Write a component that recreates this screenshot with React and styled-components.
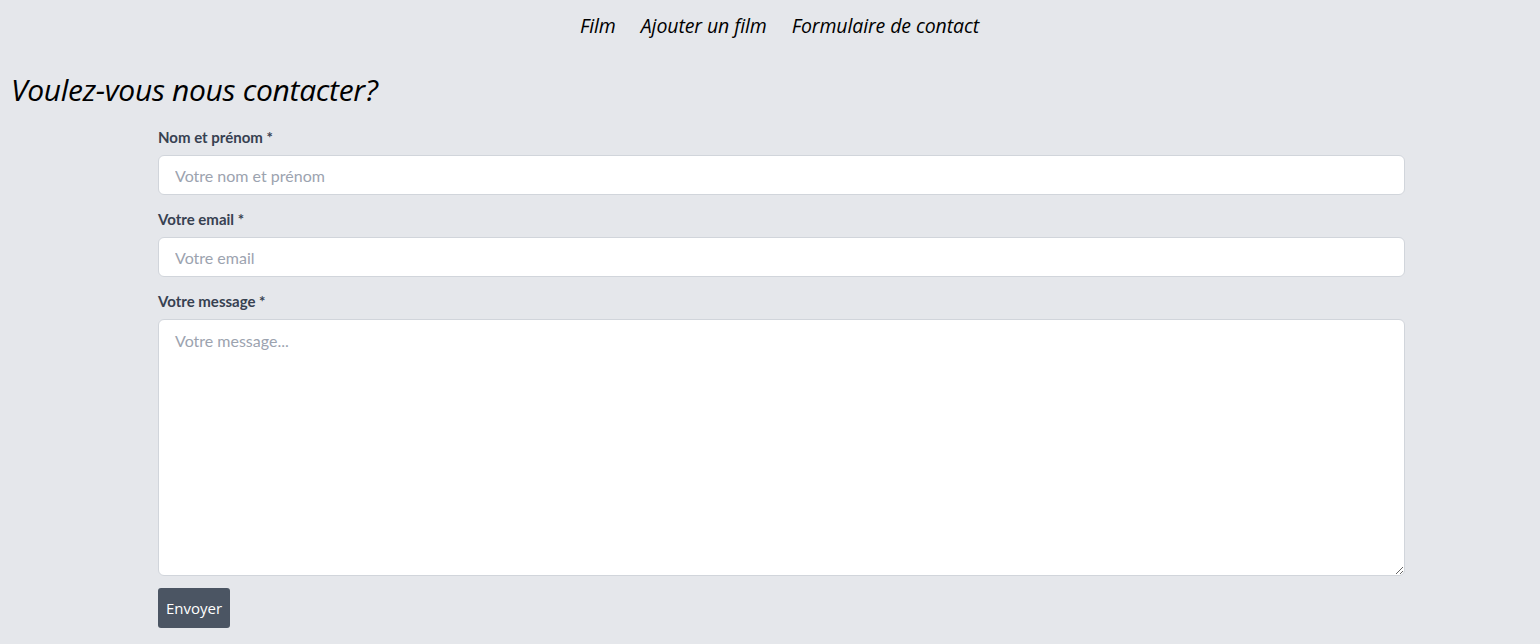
import React from 'react';
import styled, { createGlobalStyle } from 'styled-components';

const GlobalStyle = createGlobalStyle`
    body {
        margin: 8px;
        background: #e5e7eb;
        font-family: "Open Sans", "Noto Sans", sans-serif;
    }
`

const Nav = styled.nav`
    display: flex;
    justify-content: center;
    gap: 25px;
    height: 36px;
    line-height: 36px;
    padding-left: 19px;
    a {
        font-family: "Open Sans", sans-serif;
        font-style: italic;
        font-size: 19.5px;
        color: #000;
        text-decoration: none;
        letter-spacing: -0.1px;
    }
`

const Title = styled.h1`
    margin: 26px 0 0 3px;
    font-family: "Open Sans", sans-serif;
    font-style: italic;
    font-weight: 400;
    font-size: 30px;
    line-height: 40px;
    letter-spacing: -0.3px;
    color: #000;
`

const Form = styled.form`
    display: flex;
    flex-direction: column;
    width: 1247px;
    margin: 18px 0 0 150px;
`

const Label = styled.label`
    font-family: Lato, sans-serif;
    font-weight: 700;
    font-size: 15px;
    line-height: 18px;
    color: #374151;
    margin: 0 0 9px;
`

const Input = styled.input`
    box-sizing: border-box;
    height: 40px;
    border: 1px solid #d1d5db;
    border-radius: 6px;
    background: #fff;
    padding: 0 16px;
    font-family: Lato, sans-serif;
    font-size: 16px;
    color: #111827;
    margin-bottom: 15px;
    &::placeholder { color: #9ca3af; }
`

const TextArea = styled.textarea`
    box-sizing: border-box;
    height: 257px;
    border: 1px solid #d1d5db;
    border-radius: 6px;
    background: #fff;
    padding: 11px 16px;
    font-family: Lato, sans-serif;
    font-size: 16px;
    color: #111827;
    resize: vertical;
    &::placeholder { color: #9ca3af; }
`

const Button = styled.button`
    align-self: flex-start;
    margin-top: 12px;
    height: 40px;
    padding: 0 8px;
    border: none;
    border-radius: 3px;
    background: #4b5563;
    color: #fff;
    font-family: "Open Sans", sans-serif;
    font-size: 15px;
`

export default function App() {
    return (
        <>
            <GlobalStyle />
            <Nav>
                <a href="#">Film</a>
                <a href="#">Ajouter un film</a>
                <a href="#">Formulaire de contact</a>
            </Nav>
            <Title>Voulez-vous nous contacter?</Title>
            <Form onSubmit={e => e.preventDefault()}>
                <Label>Nom et prénom *</Label>
                <Input placeholder="Votre nom et prénom" />
                <Label>Votre email *</Label>
                <Input placeholder="Votre email" />
                <Label>Votre message *</Label>
                <TextArea placeholder="Votre message..." />
                <Button>Envoyer</Button>
            </Form>
        </>
    )
}
